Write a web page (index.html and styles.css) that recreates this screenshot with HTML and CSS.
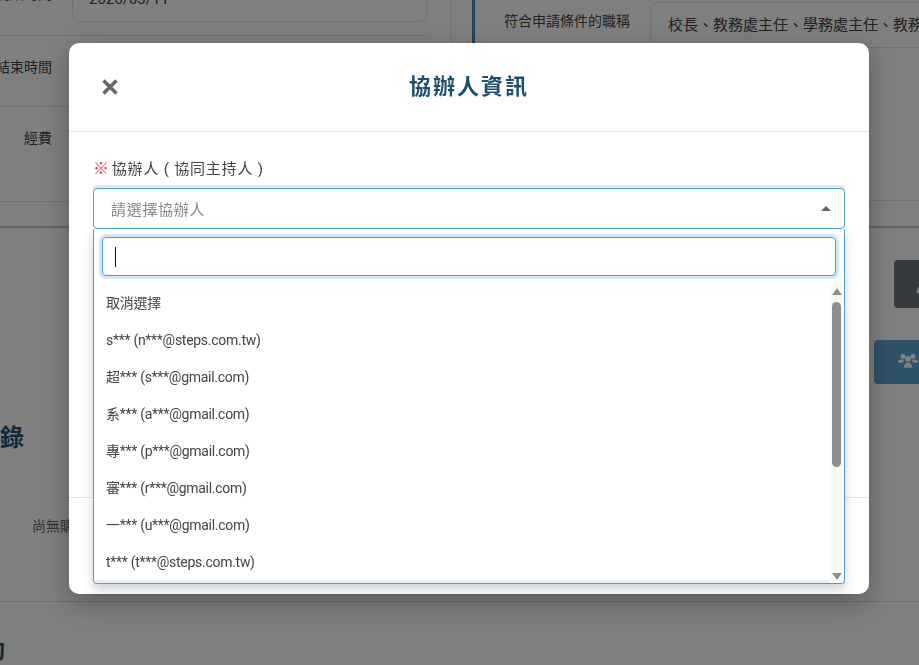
FILE: index.html
```html
<!DOCTYPE html>
<html lang="zh-Hant">
<head>
    <meta charset="UTF-8">
    <meta name="viewport" content="width=device-width, initial-scale=1.0">
    <title>協辦人資訊</title>
    <link rel="stylesheet" href="styles.css">
</head>
<body>
    <!-- 背景頁面 -->
    <div class="page">
        <section class="top">
            <div class="info-col">
                <div class="info-row first">
                    <div class="info-label">開始時間</div>
                    <div class="info-box">2026/03/11</div>
                </div>
                <div class="info-row second">
                    <div class="info-label">結束時間</div>
                </div>
                <div class="info-row third">
                    <div class="info-label">經費</div>
                </div>
            </div>
            <div class="cond-col">
                <div class="cond-inner">
                    <div class="cond-label">符合申請條件的職稱</div>
                    <div class="cond-box">校長、教務處主任、學務處主任、教務處組長、學務處組長</div>
                </div>
            </div>
        </section>

        <section class="records">
            <div class="side-buttons">
                <div class="btn-dark">
                    <svg class="dark-icon" viewBox="0 0 12 16" aria-hidden="true">
                        <path d="M6 1l6 14H0z"/>
                    </svg>
                </div>
                <div class="btn-blue">
                    <svg class="users-icon" viewBox="0 0 24 18" aria-hidden="true">
                        <circle cx="6" cy="3.500" r="3"/>
                        <circle cx="18" cy="3.500" r="3"/>
                        <circle cx="12" cy="6.500" r="3.500"/>
                        <path d="M0 11c0-2 1.500-3.500 3.500-3.500h4c-.9 1-1.500 2.200-1.500 3.500H0zM24 11c0-2-1.500-3.500-3.500-3.500h-4c.9 1 1.500 2.200 1.500 3.500h6zM7 17c0-3.500 1.800-6 4-6h2c2.200 0 4 2.500 4 6H7z"/>
                    </svg>
                </div>
            </div>
            <h2 class="records-title">紀錄</h2>
            <p class="records-empty">尚無購買紀錄</p>
        </section>

        <h2 class="next-title">活動</h2>
    </div>

    <!-- 對話框 -->
    <div class="overlay">
        <div class="modal">
            <div class="modal-header">
                <svg class="close-icon" viewBox="0 0 18 18" aria-hidden="true">
                    <path d="M2.500 2.500l13 13M15.500 2.500l-13 13"/>
                </svg>
                <h3 class="modal-title">協辦人資訊</h3>
            </div>
            <div class="modal-body">
                <div class="field-label"><span class="req">※</span><span>協辦人 ( 協同主持人 )</span></div>
                <div class="select-wrap">
                    <div class="select-box">
                        <span class="select-placeholder">請選擇協辦人</span>
                        <span class="select-arrow"></span>
                    </div>
                    <div class="dropdown">
                        <div class="search-box"><span class="caret"></span></div>
                        <div class="option-area">
                            <ul class="options">
                                <li>取消選擇</li>
                                <li>s*** (n***@steps.com.tw)</li>
                                <li>超*** (s***@gmail.com)</li>
                                <li>系*** (a***@gmail.com)</li>
                                <li>專*** (p***@gmail.com)</li>
                                <li>審*** (r***@gmail.com)</li>
                                <li>一*** (u***@gmail.com)</li>
                                <li>t*** (t***@steps.com.tw)</li>
                                <li class="highlight">&nbsp;</li>
                            </ul>
                            <div class="scrollbar">
                                <span class="arrow-up"></span>
                                <span class="thumb"></span>
                                <span class="arrow-down"></span>
                            </div>
                        </div>
                    </div>
                </div>
            </div>
            <div class="modal-footer"></div>
        </div>
    </div>
</body>
</html>
```

FILE: styles.css
```css
/* 基礎重置 */
* {
    margin: 0;
    padding: 0;
    box-sizing: border-box;
}

html, body {
    height: 100%;
    overflow: hidden;
}

body {
    font-family: Roboto, "Noto Sans CJK TC", sans-serif;
    color: #333;
    background: #fff;
}

/* 背景頁面 */
.page {
    height: 665px;
    overflow: hidden;
}

.top {
    display: grid;
    grid-template-columns: 451px 1fr;
    height: 228px;
    border-bottom: 2px solid #ccc;
}

.info-col {
    width: 427px;
}

.info-row {
    display: flex;
    border-bottom: 1px solid #e2e2e2;
}

.first {
    height: 36px;
}

.second {
    height: 71px;
}

.third {
    height: 95px;
}

.info-label {
    width: 52px;
    flex: none;
    text-align: right;
    font-size: 14px;
    line-height: 20px;
    white-space: nowrap;
    direction: rtl;
    color: #444;
    padding-top: 21px;
}

.first .info-label {
    padding-top: 0;
    margin-top: -16px;
}

.info-box {
    flex: 1;
    margin: -24px 0 0 20px;
    height: 46px;
    padding: 12px 16px;
    border: 1px solid #e3e3e3;
    border-radius: 8px;
    font-size: 15px;
    line-height: 20px;
    color: #444;
}

.cond-col {
    border-left: 1px solid #dce6ec;
    padding-left: 20px;
}

.cond-inner {
    display: flex;
    height: 201px;
    border-left: 3px solid #3f8ac4;
    border-bottom: 1px solid #e2e2e2;
    overflow: hidden;
}

.cond-label {
    width: 175px;
    flex: none;
    padding: 11px 0 0 29px;
    font-size: 14px;
    line-height: 20px;
    color: #444;
}

.cond-box {
    flex: none;
    width: 600px;
    height: 46px;
    margin-top: 2px;
    padding: 10px 17px;
    border: 1px solid #e3e3e3;
    border-radius: 8px;
    font-size: 15px;
    line-height: 24px;
    color: #444;
}

/* 紀錄區塊 */
.records {
    position: relative;
    height: 374px;
    padding-top: 194px;
    border-bottom: 1px solid #ddd;
}

.side-buttons {
    position: absolute;
    top: 32px;
    right: -21px;
    display: flex;
    flex-direction: column;
    align-items: flex-end;
    gap: 32px;
}

.btn-dark {
    width: 46px;
    height: 48px;
    background: #6f7680;
    border-radius: 4px;
    padding: 18px 0 0 22px;
}

.dark-icon {
    display: block;
    width: 12px;
    height: 16px;
    fill: #fff;
}

.btn-blue {
    width: 66px;
    height: 44px;
    background: #5fa5d8;
    border-radius: 4px;
    padding: 13px 0 0 24px;
}

.users-icon {
    display: block;
    width: 20px;
    height: 16px;
    fill: #fff;
}

.records-title {
    margin-left: -24px;
    font-size: 24px;
    line-height: 32px;
    color: #1f5478;
}

.records-empty {
    margin: 62px 0 0 32px;
    font-size: 14px;
    line-height: 20px;
    color: #666;
}

.next-title {
    margin: 32px 0 0 -43px;
    font-size: 24px;
    line-height: 32px;
    color: #1f5478;
}

/* 對話框 */
.overlay {
    position: fixed;
    inset: 0;
    background: rgba(0, 0, 0, .5);
    padding: 43px 0 0 69px;
}

.modal {
    width: 800px;
    height: 551px;
    background: #fff;
    border-radius: 10px;
    box-shadow: 0 8px 28px rgba(0, 0, 0, .3);
    display: flex;
    flex-direction: column;
}

.modal-header {
    position: relative;
    height: 89px;
    flex: none;
    border-bottom: 1px solid #e2e2e2;
    display: flex;
    justify-content: center;
    padding-top: 27px;
}

.close-icon {
    position: absolute;
    left: 32px;
    top: 35px;
    width: 18px;
    height: 18px;
    fill: none;
    stroke: #666;
    stroke-width: 3.400;
}

.modal-title {
    font-size: 22px;
    line-height: 34px;
    letter-spacing: 2px;
    font-weight: 700;
    color: #1f4e6e;
}

.modal-body {
    height: 365px;
    flex: none;
    padding: 25px 24px 0;
}

.field-label {
    display: flex;
    gap: 2px;
    font-size: 15px;
    line-height: 24px;
    letter-spacing: .8px;
    color: #444;
    margin-bottom: 7px;
}

.req {
    font-size: 16px;
    color: #e0394f;
}

.select-wrap {
    position: relative;
}

.select-box {
    height: 41px;
    display: flex;
    align-items: center;
    justify-content: space-between;
    padding: 0 13px 0 17px;
    border: 1px solid #4d9bdb;
    border-radius: 4px;
    box-shadow: 0 -3px 0 #d9e9f6;
}

.select-placeholder {
    font-size: 15px;
    letter-spacing: .7px;
    color: #888;
}

.select-arrow {
    width: 0;
    height: 0;
    border-left: 5px solid transparent;
    border-right: 5px solid transparent;
    border-bottom: 5px solid #666;
}

.dropdown {
    position: absolute;
    left: 0;
    right: 0;
    top: 41px;
    height: 355px;
    background: #fff;
    border: 1px solid #4d9bdb;
    border-top: 0;
    border-radius: 0 0 4px 4px;
    box-shadow: 0 6px 12px rgba(0, 0, 0, .18);
    display: flex;
    flex-direction: column;
    overflow: hidden;
}

.search-box {
    flex: none;
    height: 39px;
    margin: 8px 8px 0;
    padding: 9px 0 0 12px;
    border: 1px solid #4d9bdb;
    border-radius: 4px;
    box-shadow: 0 0 0 3px #d6e8f6;
}

.caret {
    display: block;
    width: 1px;
    height: 20px;
    background: #111;
}

.option-area {
    flex: 1;
    min-height: 0;
    display: flex;
    margin-top: 8px;
}

.options {
    flex: 1;
    min-width: 0;
    list-style: none;
    overflow: hidden;
}

.options li {
    height: 37px;
    padding: 1px 0 0 12px;
    font-size: 14px;
    line-height: 37px;
    letter-spacing: -.28px;
    color: #444;
}

.options .highlight {
    background: #e3f0fa;
}

.scrollbar {
    width: 13px;
    flex: none;
    margin-right: 1px;
    background: #fafafa;
    display: flex;
    flex-direction: column;
    align-items: center;
}

.arrow-up, .arrow-down {
    width: 0;
    height: 0;
    border-left: 5px solid transparent;
    border-right: 5px solid transparent;
}

.arrow-up {
    margin-top: 4px;
    border-bottom: 7px solid #8f8f8f;
}

.thumb {
    width: 9px;
    height: 165px;
    margin-top: 7px;
    background: #8f8f8f;
    border-radius: 5px;
}

.arrow-down {
    margin-top: auto;
    margin-bottom: 3px;
    border-top: 7px solid #8f8f8f;
}

.modal-footer {
    flex: 1;
    border-top: 1px solid #e2e2e2;
}
```
